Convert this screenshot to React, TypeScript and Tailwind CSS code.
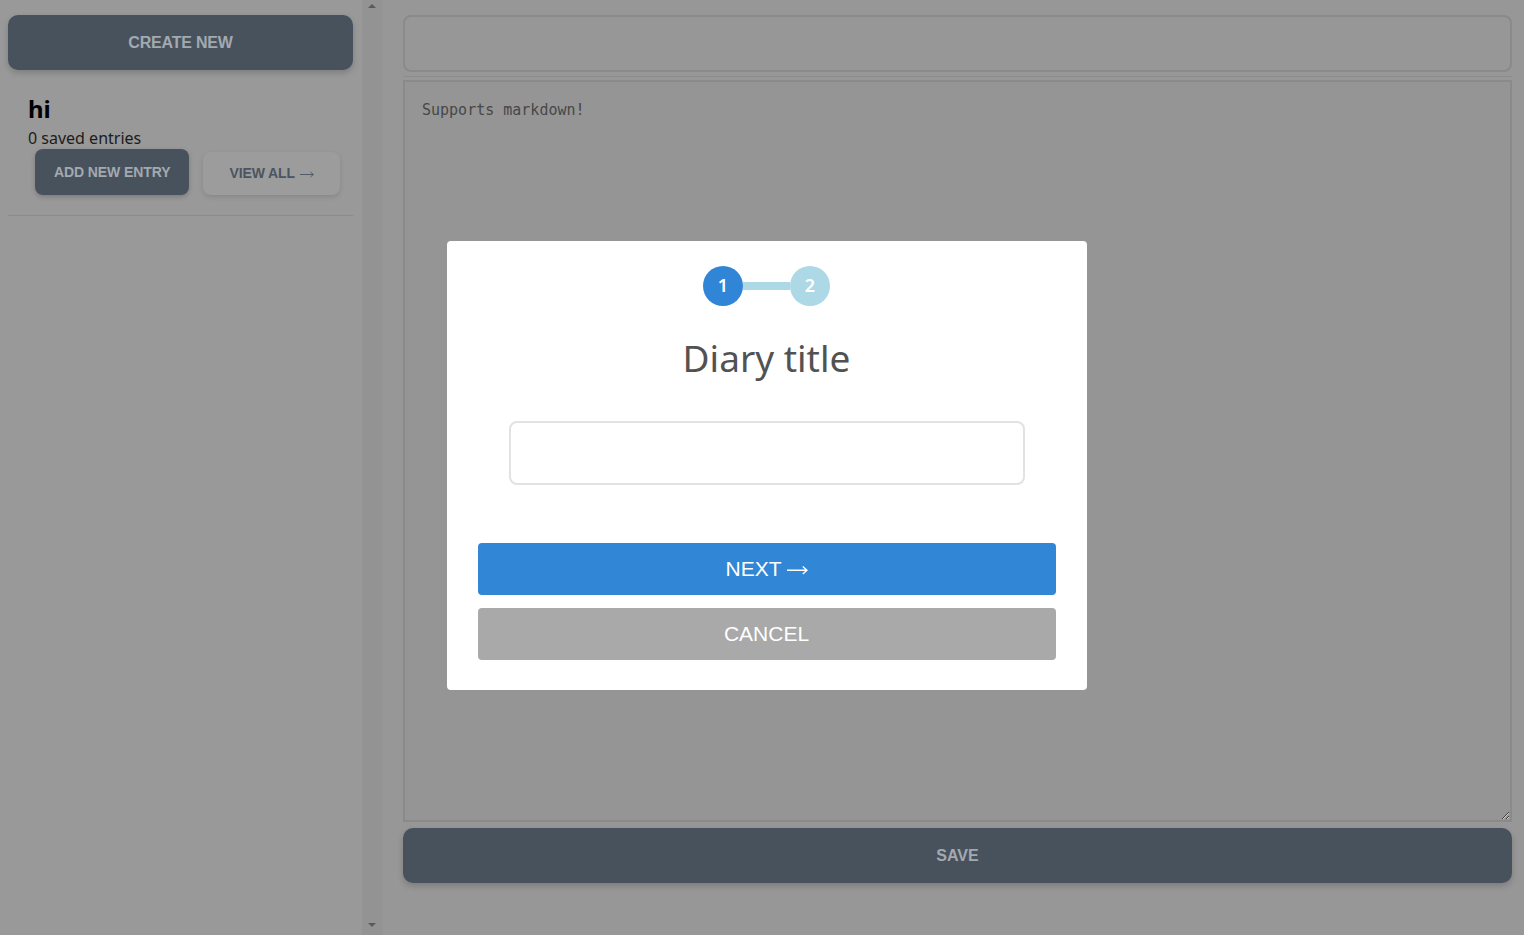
const Arrow = () => (
  <svg viewBox="0 0 20 10" className="ml-[5px] inline-block h-[0.5em] w-[1em] align-[0.02em]" fill="none" stroke="currentColor" strokeWidth="1.3">
    <path d="M0 5h19M15 1.5l4 3.5-4 3.5" />
  </svg>
);

export default function App() {
  return (
    <div className="relative flex h-screen w-full overflow-hidden bg-[#979797] font-['Liberation_Sans',Arial,sans-serif]">
      {/* Sidebar */}
      <aside className="flex w-[362px] shrink-0 flex-col bg-[#999999] pl-2 pr-[9px] pt-[15px]">
        <button className="h-[55px] w-full rounded-[10px] bg-[#48525d] text-[16px] font-bold tracking-[-0.2px] text-[#a3a9b0] shadow-[0_3px_6px_rgba(0,0,0,0.18)]">
          CREATE NEW
        </button>

        <div className="px-5">
          <h2 className="mt-[23px] font-['Noto_Sans',sans-serif] text-[24px] font-bold leading-[32px] text-black">hi</h2>
          <p className="mt-px font-['Noto_Sans',sans-serif] text-[16px] leading-[24px] text-[#1c1c1c]">0 saved entries</p>
          <div className="-mt-px ml-[7px] flex items-end gap-[14px] whitespace-nowrap">
            <button className="h-[46px] shrink-0 rounded-lg bg-[#48525d] px-[19px] text-[14px] font-bold tracking-[-0.1px] text-[#a3a9b0] shadow-[0_2px_5px_rgba(0,0,0,0.2)]">
              ADD NEW ENTRY
            </button>
            <button className="h-[43px] shrink-0 rounded-lg bg-[#9c9c9c] px-[26px] text-[14px] font-bold tracking-[-0.1px] text-[#4b5461] shadow-[0_2px_5px_rgba(0,0,0,0.12)]">
              VIEW ALL<Arrow />
            </button>
          </div>
        </div>

        <div className="mt-5 h-px w-full bg-[#8b8b8b]" />
      </aside>

      {/* Sidebar scrollbar track */}
      <div className="flex w-[21px] shrink-0 flex-col items-center justify-between border-r border-[#959595] bg-[#939393] py-[4px]">
        <div className="h-0 w-0 border-x-[4px] border-b-[4px] border-x-transparent border-b-[#5a5a5a]" />
        <div className="mb-[4px] h-0 w-0 border-x-[4px] border-t-[4px] border-x-transparent border-t-[#5a5a5a]" />
      </div>

      {/* Editor */}
      <main className="flex flex-1 flex-col pl-[20px] pr-[12px] pt-[15px]">
        <input className="h-[57px] w-full rounded-lg border-2 border-[#8a8a8a] bg-[#979797] outline-none" />
        <div className="mt-[4px] h-px w-full bg-[#8c8c8c]" />
        <textarea
          placeholder="Supports markdown!"
          className="mt-[3px] h-[742px] w-full border-2 border-[#8a8a8a] bg-[#959595] px-[17px] pt-[18px] font-['DejaVu_Sans_Mono',monospace] text-[15px] leading-[20px] text-[#474747] outline-none placeholder:text-[#474747]"
        />
        <button className="mt-[6px] h-[55px] w-full rounded-[10px] bg-[#48525d] text-[16px] font-bold text-[#a3a9b0] shadow-[0_3px_6px_rgba(0,0,0,0.18)]">
          SAVE
        </button>
      </main>

      {/* Modal */}
      <div className="absolute inset-0 flex items-center justify-center pb-[5px] pl-[9px]">
        <div className="flex w-[640px] flex-col items-center rounded bg-white px-[31px] pb-[30px] pt-[25px]">
          <div className="flex items-center">
            <div className="flex h-10 w-10 items-center justify-center rounded-full bg-[#3185d6] font-['Noto_Sans',sans-serif] text-[18px] font-semibold text-white">
              1
            </div>
            <div className="h-[8px] w-[47px] bg-[#add8e6]" />
            <div className="flex h-10 w-10 items-center justify-center rounded-full bg-[#add8e6] font-['Noto_Sans',sans-serif] text-[18px] font-semibold text-white">
              2
            </div>
          </div>

          <h1 className="mt-[28px] font-['Noto_Sans',sans-serif] text-[37px] leading-[48px] text-[#525252]">Diary title</h1>

          <input className="mt-[39px] h-[64px] w-[516px] rounded-lg border-2 border-[#e2e2e2] bg-white outline-none" />

          <button className="mt-[58px] h-[52px] w-full rounded bg-[#3186d6] text-[21px] text-white">
            NEXT<Arrow />
          </button>
          <button className="mt-[13px] h-[52px] w-full rounded bg-[#a9a9a9] text-[21px] text-white">CANCEL</button>
        </div>
      </div>
    </div>
  );
}
